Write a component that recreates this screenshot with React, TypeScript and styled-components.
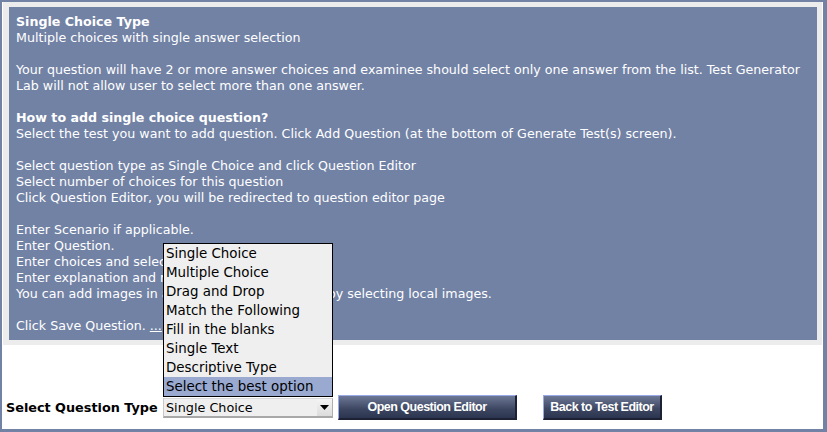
import React from "react";
import styled, { createGlobalStyle } from "styled-components";

const Global = createGlobalStyle`
  html, body { margin: 0; padding: 0; background: #fff; }
  body { font-family: "DejaVu Sans", Verdana, sans-serif; }
  * { box-sizing: border-box; }
`;

const Frame = styled.div`
  width: 827px;
  height: 432px;
  background: #fff;
  border-style: solid;
  border-color: #7282a5;
  border-width: 2px 4px 3px 2px;
  display: flex;
  flex-direction: column;
`;

const GrayBox = styled.div`
  margin: 0 1px 0 1px;
  padding: 5px 5px 5px 6px;
  background: #ececec;
`;

const Panel = styled.div`
  background: #7282a5;
  color: #fff;
  font-size: 12.65px;
  line-height: 16px;
  padding: 7px 7px 6px 7px;
`;

const Para = styled.p`
  margin: 0 0 16px 0;
  &:last-child { margin-bottom: 0; }
`;

const Title = styled.strong`
  font-weight: bold;
`;

const Link = styled.span`
  text-decoration: underline;
`;

const Spacer = styled.div`
  flex: 1;
`;

const Row = styled.div`
  display: flex;
  align-items: center;
  padding: 0 0 9px 4px;
  height: 34px;
`;

const Label = styled.span`
  font-weight: bold;
  font-size: 12.8px;
  color: #000;
  width: 157px;
  white-space: nowrap;
`;

const SelectWrap = styled.div`
  position: relative;
  width: 170px;
  height: 20px;
  margin-right: 5px;
`;

const SelectBox = styled.div`
  width: 100%;
  height: 100%;
  display: flex;
  align-items: center;
  background: #efefef;
  border-left: 1px solid #c8c8c8;
  border-top: 1px solid #d8d8d8;
  border-bottom: 2px solid #a8a8a8;
  border-right: 1px solid #b0b0b0;
  font-size: 12.8px;
  color: #000;
`;

const SelectText = styled.span`
  flex: 1;
  padding-left: 2px;
`;

const Arrow = styled.div`
  width: 15px;
  height: 100%;
  display: flex;
  align-items: center;
  justify-content: center;
  background: linear-gradient(#f4f4f4, #dcdcdc);
`;

const List = styled.div`
  position: absolute;
  left: 0;
  bottom: calc(100% + 1px);
  width: 170px;
  background: #efefef;
  border: 1px solid #000;
`;

const Item = styled.div<{ $active?: boolean }>`
  height: 19px;
  line-height: 19px;
  padding-left: 2px;
  font-size: 13.4px;
  color: #000;
  white-space: nowrap;
  background: ${(p) => (p.$active ? "#99a9d0" : "transparent")};
`;

const Button = styled.button<{ $w: number; $ml: number }>`
  width: ${(p) => p.$w}px;
  margin-left: ${(p) => p.$ml}px;
  height: 25px;
  padding: 0;
  font-family: "Liberation Sans", Arial, sans-serif;
  font-weight: bold;
  font-size: 12.5px;
  letter-spacing: -0.5px;
  color: #fff;
  background: linear-gradient(#6d7896, #3c4661 60%, #2c3550);
  border-style: solid;
  border-width: 1px 2px 2px 1px;
  border-color: #9aaae6 #1c2233 #1c2233 #9aaae6;
  cursor: pointer;
`;

const items = [
  "Single Choice",
  "Multiple Choice",
  "Drag and Drop",
  "Match the Following",
  "Fill in the blanks",
  "Single Text",
  "Descriptive Type",
  "Select the best option",
];

export default function App() {
  return (
    <>
      <Global />
      <Frame>
        <GrayBox>
          <Panel>
            <Para>
              <Title>Single Choice Type</Title>
              <br />
              Multiple choices with single answer selection
            </Para>
            <Para>
              Your question will have 2 or more answer choices and examinee should select only one answer from the list. Test Generator Lab will not allow user to select more than one answer.
            </Para>
            <Para>
              <Title>How to add single choice question?</Title>
              <br />
              Select the test you want to add question. Click Add Question (at the bottom of Generate Test(s) screen).
            </Para>
            <Para>
              Select question type as Single Choice and click Question Editor
              <br />
              Select number of choices for this question
              <br />
              Click Question Editor, you will be redirected to question editor page
            </Para>
            <Para>
              Enter Scenario if applicable.
              <br />
              Enter Question.
              <br />
              Enter choices and select the correct answer.
              <br />
              Enter explanation and reference if applicable.
              <br />
              You can add images in any of the above fields or by selecting local images.
            </Para>
            <Para>
              Click Save Question. <Link>...</Link>
            </Para>
          </Panel>
        </GrayBox>
        <Spacer />
        <Row>
          <Label>Select Question Type</Label>
          <SelectWrap>
            <List>
              {items.map((t, i) => (
                <Item key={t} $active={i === items.length - 1}>
                  {t}
                </Item>
              ))}
            </List>
            <SelectBox>
              <SelectText>Single Choice</SelectText>
              <Arrow>
                <svg width="9" height="5" viewBox="0 0 9 5">
                  <path d="M0 0H9L4.5 5Z" fill="#000" />
                </svg>
              </Arrow>
            </SelectBox>
          </SelectWrap>
          <Button $w={179} $ml={0}>Open Question Editor</Button>
          <Button $w={119} $ml={26}>Back to Test Editor</Button>
        </Row>
      </Frame>
    </>
  );
}
